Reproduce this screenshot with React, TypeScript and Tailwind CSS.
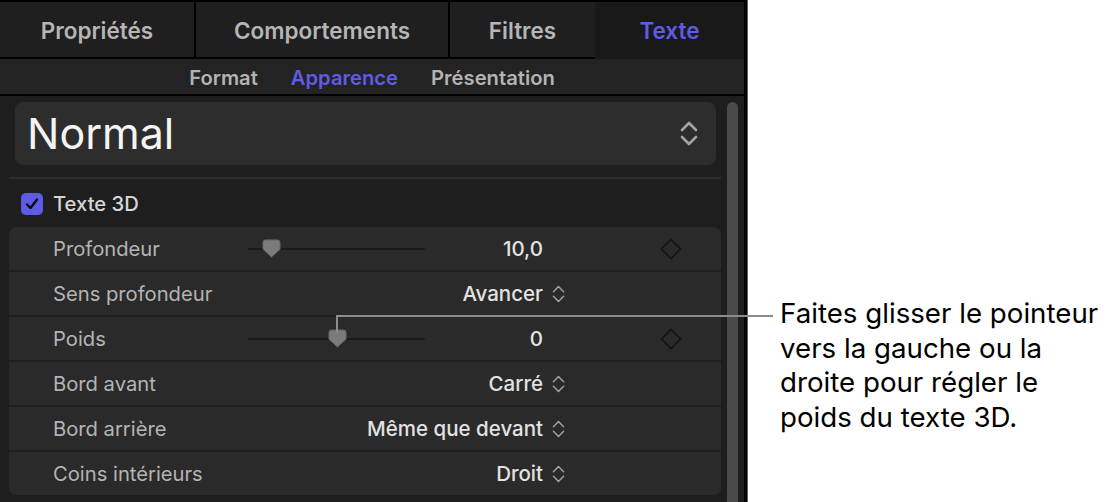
import React from "react";

const UpDown = ({ big = false }: { big?: boolean }) =>
  big ? (
    <svg width="18" height="28" viewBox="0 0 18 28" fill="none">
      <path d="M2 10 L9 3 L16 10" stroke="#a4a4a4" strokeWidth="2.6" strokeLinecap="round" strokeLinejoin="round" />
      <path d="M2 17 L9 24 L16 17" stroke="#a4a4a4" strokeWidth="2.6" strokeLinecap="round" strokeLinejoin="round" />
    </svg>
  ) : (
    <svg width="14" height="20" viewBox="0 0 14 20" fill="none">
      <path d="M1.5 7.5 L7 2 L12.5 7.5" stroke="#a2a2a2" strokeWidth="1.6" strokeLinecap="round" strokeLinejoin="round" />
      <path d="M1.5 12.5 L7 18 L12.5 12.5" stroke="#a2a2a2" strokeWidth="1.6" strokeLinecap="round" strokeLinejoin="round" />
    </svg>
  );

const Diamond = () => (
  <svg width="22" height="22" viewBox="0 0 22 22" fill="none">
    <polygon points="11,1.5 20.5,11 11,20.5 1.5,11" stroke="#141414" strokeWidth="1.6" />
  </svg>
);

const Thumb = () => (
  <svg width="19" height="19" viewBox="0 0 19 19">
    <path
      d="M3.5 0.8 H15.5 Q18.2 0.8 18.2 3.5 V10.2 L9.5 18.2 L0.8 10.2 V3.5 Q0.8 0.8 3.5 0.8 Z"
      fill="#7b7b7b"
      stroke="#555"
      strokeWidth="0.8"
    />
  </svg>
);

const Slider = ({ pos }: { pos: number }) => (
  <div className="relative w-[177px] h-[20px] flex items-center">
    <div className="w-full h-[2px] bg-[#1b1b1b]" />
    <div className="absolute top-[0px]" style={{ left: pos }}>
      <Thumb />
    </div>
  </div>
);

type Row = {
  label: string;
  value: string;
  slider?: number;
  popup?: boolean;
};

const rows: Row[] = [
  { label: "Profondeur", value: "10,0", slider: 14 },
  { label: "Sens profondeur", value: "Avancer", popup: true },
  { label: "Poids", value: "0", slider: 80 },
  { label: "Bord avant", value: "Carré", popup: true },
  { label: "Bord arrière", value: "Même que devant", popup: true },
  { label: "Coins intérieurs", value: "Droit", popup: true },
];

export default function App() {
  return (
    <div className="relative w-[1108px] h-[502px] bg-white flex overflow-hidden font-[family-name:Inter,sans-serif]">
      {/* Panel */}
      <div className="w-[748px] h-full flex border-r border-[#5c5c5c]">
        <div className="w-[747px] h-full flex flex-col bg-[#1e1e1e] border-t-2 border-r-[3px] border-black">
          {/* Tabs */}
          <div className="flex h-[57px] shrink-0 text-[22.5px] font-semibold">
            <div className="w-[196px] h-full flex items-center justify-center pt-[2px] bg-[#1f1f1f] border-r-2 border-b-2 border-black text-[#b5b5b5]">
              Propriétés
            </div>
            <div className="w-[254px] h-full flex items-center justify-center pt-[2px] bg-[#1f1f1f] border-r-2 border-b-2 border-black text-[#b5b5b5]">
              Comportements
            </div>
            <div className="w-[145px] h-full flex items-center justify-center pt-[2px] bg-[#1f1f1f] border-b-2 border-black text-[#b5b5b5]">
              Filtres
            </div>
            <div className="flex-1 h-full flex items-center justify-center bg-[#191919] text-[#5e5ce6]">
              Texte
            </div>
          </div>
          {/* Sub tabs */}
          <div className="h-[37px] shrink-0 flex items-center justify-center gap-[33px] pt-[4px] bg-[#232323] border-b-2 border-black text-[20.2px] font-semibold text-[#b3b3b3]">
            <span>Format</span>
            <span className="text-[#5e5ce6]">Apparence</span>
            <span>Présentation</span>
          </div>
          {/* Content */}
          <div className="flex-1 flex min-h-0">
            <div className="w-[727px] flex flex-col">
              <div className="ml-[15px] mt-[6px] w-[701px] h-[63px] rounded-[8px] bg-[#2d2d2d] flex items-center justify-between pl-[12px] pr-[18px]">
                <span className="text-[43px] text-[#f4f4f4] leading-none">Normal</span>
                <UpDown big />
              </div>
              <div className="ml-[9px] mt-[12px] w-[712px] h-[2px] bg-[#2d2d2d]" />
              <div className="ml-[21px] mt-[14px] h-[22px] flex items-center gap-[10px]">
                <div className="w-[22px] h-[22px] rounded-[5px] bg-[#5e5ce6] flex items-center justify-center">
                  <svg width="16" height="16" viewBox="0 0 16 16" fill="none">
                    <path d="M3 8.5 L6.5 12 L13 3.5" stroke="#0a0a0a" strokeWidth="2.4" strokeLinecap="round" strokeLinejoin="round" />
                  </svg>
                </div>
                <span className="text-[20.2px] font-medium text-[#d6d6d6]">Texte 3D</span>
              </div>
              <div className="ml-[9px] mt-[12px] w-[712px] flex flex-col gap-[2px] bg-[#1f1f1f] rounded-[7px] overflow-hidden">
                {rows.map((r) => (
                  <div key={r.label} className="h-[43px] shrink-0 bg-[#2a2a2a] flex items-center pl-[44px] pt-[1px]">
                    <span className="w-[195px] text-[20.2px] text-[#b4b4b4]">{r.label}</span>
                    {r.slider !== undefined ? (
                      <>
                        <Slider pos={r.slider} />
                        <span className="w-[118px] text-right text-[20.5px] font-medium text-[#e2e2e2]">{r.value}</span>
                      </>
                    ) : (
                      <span className="w-[295px] text-right text-[20.5px] font-medium text-[#e2e2e2]">{r.value}</span>
                    )}
                    <div className="w-[22px] pl-[9px] flex items-center">{r.popup && <UpDown />}</div>
                    <div className="w-[95px]" />
                    {r.slider !== undefined && <Diamond />}
                  </div>
                ))}
              </div>
            </div>
            <div className="w-[11px] mt-[6px] rounded-t-full bg-[#4a4a4a]" />
          </div>
        </div>
      </div>
      {/* Annotation */}
      <div className="flex-1 pl-[32px] pt-[296px]">
        <p className="text-[27.7px] leading-[34.5px] text-black">
          Faites glisser le pointeur
          <br />
          vers la gauche ou la
          <br />
          droite pour régler le
          <br />
          poids du texte 3D.
        </p>
      </div>
      {/* Callout line */}
      <div className="absolute left-[336px] top-[315px] w-[437px] h-[2px] bg-[#8c8c8c]" />
      <div className="absolute left-[336px] top-[315px] w-[2px] h-[17px] bg-[#8c8c8c]" />
    </div>
  );
}
